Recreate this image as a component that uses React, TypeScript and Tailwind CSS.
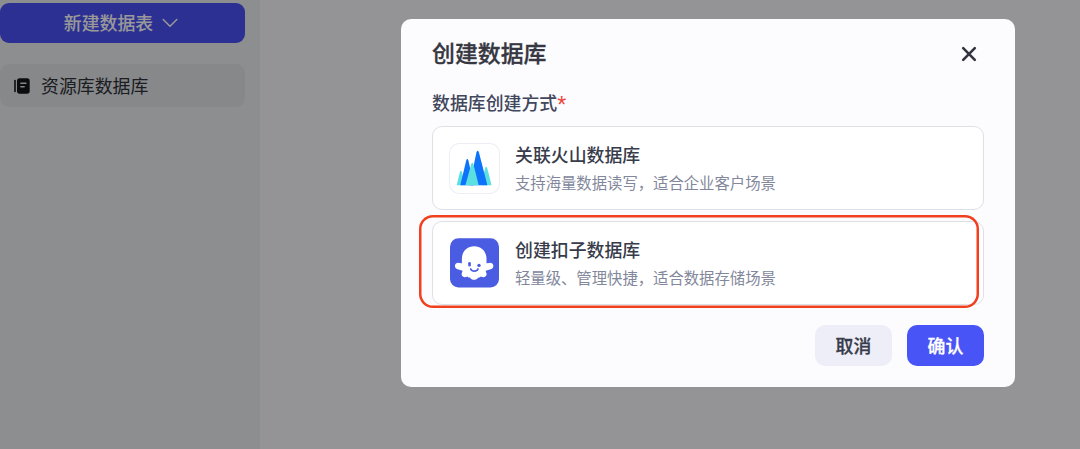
import React, { useState } from 'react';
import { clsx } from 'clsx';

const VolcanoIcon = () => (
  <svg width="51" height="51" viewBox="0 0 51 51">
    <path d="M10.900 29Q11.900 26.300 12.900 29L16 42.200H7.700Z" fill="#5be0e2" />
    <path d="M36.200 25Q37.200 22.300 38.200 25L42.600 42.200H32Z" fill="#5be0e2" />
    <path d="M17.200 17.500Q18.300 14.600 19.400 17.500L25 42.200H11.300Z" fill="#0d73fa" />
    <path d="M27.500 9.300Q28.700 6.400 29.900 9.300L38.400 42.200H20.500Z" fill="#0d73fa" />
    <path d="M22.200 21.300Q23.300 18.400 24.400 21.300L29.700 42.200H16.400Z" fill="#5be0e2" />
  </svg>
);

const CozeIcon = () => (
  <svg width="51" height="51" viewBox="0 0 51 51">
    <rect x="1" y="0.300" width="49" height="49.200" rx="8.500" fill="#4a5ce2" />
    <path
      d="M25.200 8.300C18.200 8.300 12.900 13.500 12.900 20.600V25.300L10 24.900C5.200 24.300 4.500 30 8.600 31.200L13.600 32.700L12.700 35.500C12 38.700 15.500 40 18.300 38.600C19.100 39.500 20.100 39.700 21.200 39.700C22.500 42.500 27.700 42.500 29 39.700C30.100 39.700 31.100 39.500 31.900 38.600C34.700 40 38.200 38.700 37.500 35.500L36.600 32.700L41.700 31.200C45.800 30 45.100 24.300 40.300 24.900L37.500 25.300V20.600C37.500 13.500 32.200 8.300 25.200 8.300Z"
      fill="#fff"
    />
    <rect x="19.200" y="24" width="2.600" height="4.600" rx="1.300" fill="#4a5ce2" />
    <circle cx="30" cy="27.400" r="1.700" fill="#4a5ce2" />
    <path d="M21.700 31c1.200 2.900 6.100 2.900 7.300 0" fill="none" stroke="#4a5ce2" strokeWidth="1.700" strokeLinecap="round" />
  </svg>
);

const options = [
  { id: 'volcano', title: '关联火山数据库', desc: '支持海量数据读写，适合企业客户场景', icon: <VolcanoIcon /> },
  { id: 'coze', title: '创建扣子数据库', desc: '轻量级、管理快捷，适合数据存储场景', icon: <CozeIcon /> },
];

const Sidebar = () => (
  <aside className="w-[260px] h-full bg-[#e9edee] pt-[3px] pr-[15px]">
    <button className="w-full h-[40px] rounded-[9px] bg-[#4a51f5] text-white flex items-center justify-center gap-[9px] text-[17.9px] leading-[24px] font-medium">
      <span className="-ml-[3px] -mt-[2px]">新建数据表</span>
      <svg width="16" height="10" viewBox="0 0 16 10" fill="none" stroke="currentColor" strokeWidth="1.500" strokeLinecap="round" strokeLinejoin="round">
        <path d="M1.200 1.500 8 8.300l6.800-6.800" />
      </svg>
    </button>
    <div className="mt-[21px] h-[43px] rounded-[9px] bg-[#e0e3e7] flex items-center pl-[14px] gap-[11px] text-[17.9px] leading-[24px] text-[#2f3138]">
      <svg width="16" height="16" viewBox="0 0 16 16">
        <path d="M1 2.500v11" stroke="#16161c" strokeWidth="1.600" strokeLinecap="round" />
        <rect x="3" y="0.300" width="12.700" height="15.400" rx="2.600" fill="#16161c" />
        <path d="M6.800 5.200h5.200M6.800 8.800h3.400" stroke="#dcdfe3" strokeWidth="1.400" strokeLinecap="round" />
      </svg>
      <span className="-mt-[2px]">资源库数据库</span>
    </div>
  </aside>
);

export default function App() {
  const [open, setOpen] = useState(true);
  const [selected, setSelected] = useState('coze');

  return (
    <div className="relative h-[449px] overflow-hidden bg-[#f7f7fa] font-['Noto_Sans_CJK_SC',sans-serif]">
      <Sidebar />

      {open && (
        <div className="absolute inset-0 bg-black/40">
          <div className="ml-[401px] mt-[18.500px] w-[614px] h-[368.500px] rounded-[10px] bg-[#fcfcff] px-[31px] pt-[18.500px]">
            <div className="flex items-center justify-between h-[31px]">
              <h2 className="text-[22.9px] leading-[31px] font-medium text-[#363741] [-webkit-text-stroke:0.3px_currentColor]">创建数据库</h2>
              <button onClick={() => setOpen(false)} className="mr-[7px] mt-[3px]">
                <svg width="16" height="16" viewBox="0 0 16 16" stroke="#33343f" strokeWidth="2.600" strokeLinecap="round">
                  <path d="M2.200 2.200l11.600 11.600M13.800 2.200 2.200 13.800" />
                </svg>
              </button>
            </div>

            <div className="flex mt-[22px] text-[17.9px] leading-[24px] font-medium text-[#41465a]">
              数据库创建方式
              <span className="font-['Liberation_Sans'] font-normal text-[23px] leading-[30px] h-[24px] text-[#f0443c]">*</span>
            </div>

            <div className="mt-[12px] flex flex-col gap-[11px]">
              {options.map(o => (
                <div
                  key={o.id}
                  onClick={() => setSelected(o.id)}
                  className="relative h-[84px] rounded-[10px] border border-[#dfe0e6] bg-white flex items-center gap-[15px] pl-[16px]"
                >
                  <div className={clsx('size-[51px] rounded-[10px]', o.id === 'volcano' && 'shadow-[inset_0_0_0_1px_#ecedf5]')}>
                    {o.icon}
                  </div>
                  <div className="-mt-[2px]">
                    <div className="text-[17.9px] leading-[26px] font-medium text-[#373b4a]">{o.title}</div>
                    <div className="mt-[3px] text-[15.350px] leading-[24px] text-[#82879b]">{o.desc}</div>
                  </div>
                  {selected === o.id && (
                    <div className="absolute -left-[14px] -top-[7px] w-[560px] h-[93px] rounded-[14px] shadow-[inset_0_0_0_2.500px_#f0401f] pointer-events-none" />
                  )}
                </div>
              ))}
            </div>

            <div className="mt-[20px] flex justify-end gap-[15px] text-[17.9px] font-medium">
              <button onClick={() => setOpen(false)} className="w-[77px] h-[41px] rounded-[10px] bg-[#eeeef8] text-[#373b4a] [-webkit-text-stroke:0.300px_currentColor]">取消</button>
              <button className="w-[77px] h-[41px] rounded-[10px] bg-[#4954f6] text-white [-webkit-text-stroke:0.300px_currentColor]">确认</button>
            </div>
          </div>
        </div>
      )}
    </div>
  );
}
